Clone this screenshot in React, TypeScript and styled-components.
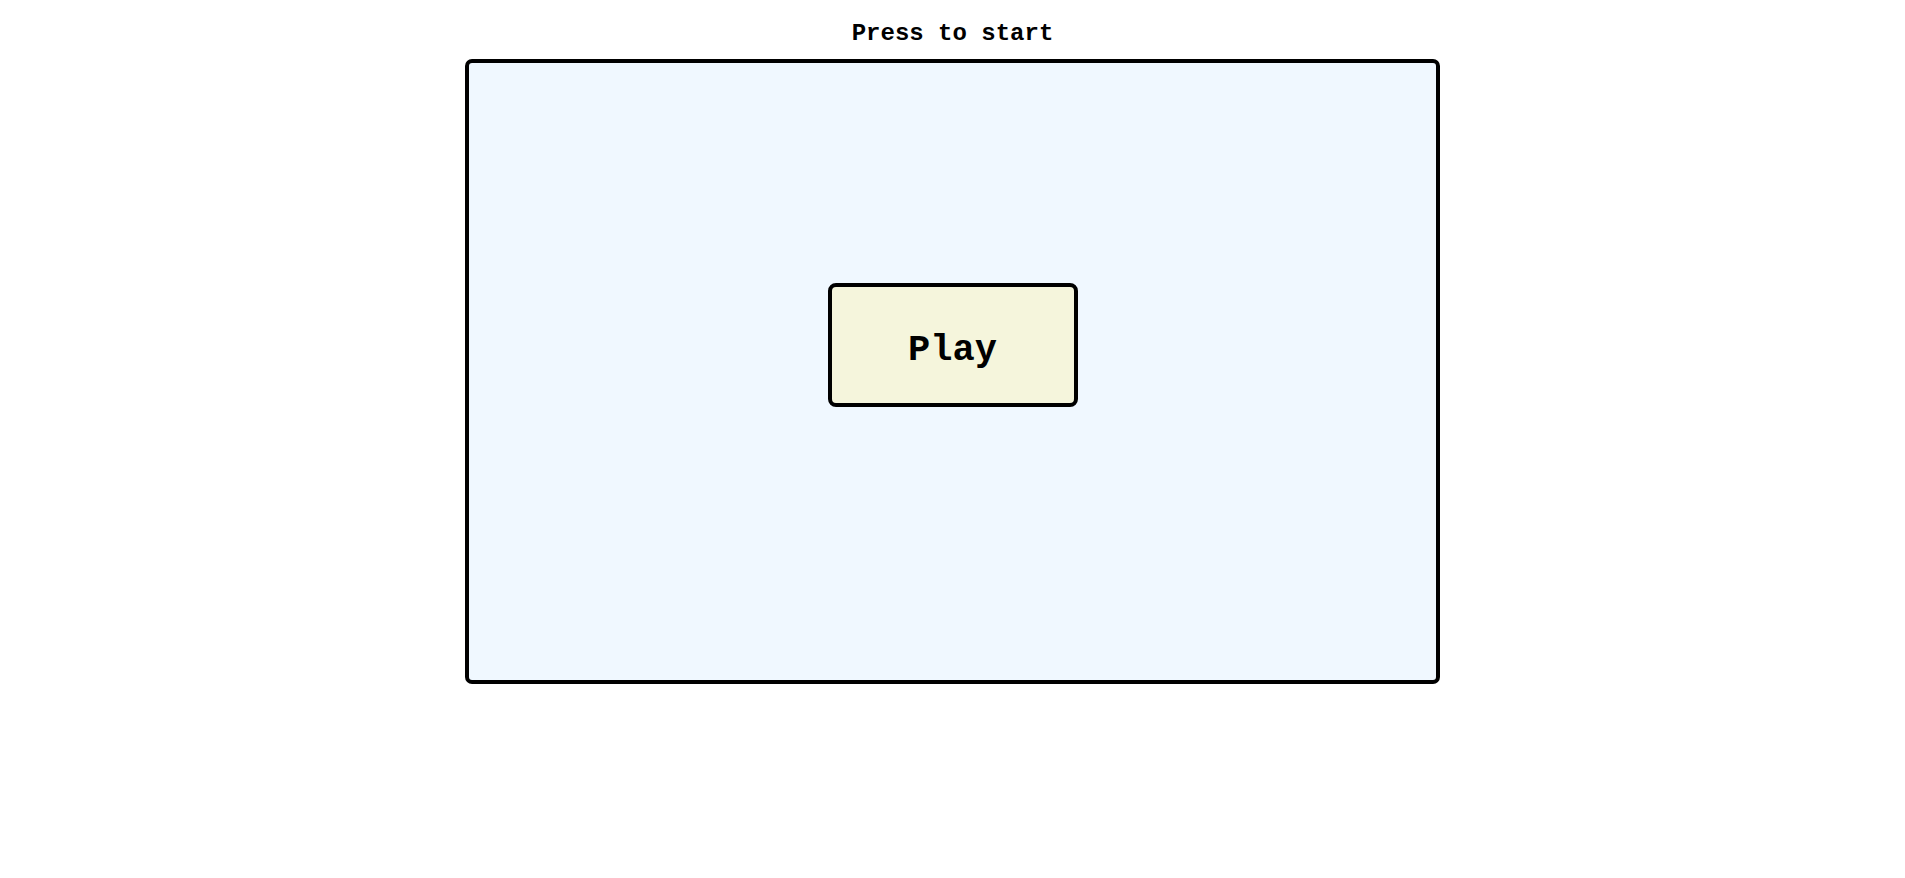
import React from "react";
import styled, { createGlobalStyle } from "styled-components";

const GlobalStyle = createGlobalStyle`
  html, body {
    margin: 0;
    padding: 0;
    background: #ffffff;
  }
  body {
    font-family: "Courier New", "Nimbus Mono PS", "FreeMono", "Courier", "Liberation Mono", monospace;
    color: #000;
  }
`;

const Page = styled.div`
  display: flex;
  flex-direction: column;
  align-items: center;
  padding-top: 20px;
`;

const Title = styled.div`
  font-family: "Courier New", "Nimbus Mono PS", "FreeMono", "Courier", "Liberation Mono", monospace;
  font-weight: bold;
  font-size: 24px;
  line-height: 27px;
  margin-bottom: 12px;
`;

const Stage = styled.div`
  box-sizing: border-box;
  width: 975px;
  height: 625px;
  border: 4px solid #000;
  border-radius: 7px;
  background: #f0f8ff;
  display: flex;
  flex-direction: column;
  align-items: center;
  padding-top: 220px;
`;

const PlayButton = styled.button`
  box-sizing: border-box;
  width: 250px;
  height: 124px;
  border: 4px solid #000;
  border-radius: 8px;
  background: #f5f5dc;
  font-family: "Courier New", "Nimbus Mono PS", "FreeMono", "Courier", "Liberation Mono", monospace;
  font-weight: bold;
  font-size: 37px;
  color: #000;
  padding: 9px 0 0;
  cursor: pointer;
  display: flex;
  align-items: center;
  justify-content: center;
`;

export default function App() {
  return (
    <>
      <GlobalStyle />
      <Page>
        <Title>Press to start</Title>
        <Stage>
          <PlayButton>Play</PlayButton>
        </Stage>
      </Page>
    </>
  );
}
